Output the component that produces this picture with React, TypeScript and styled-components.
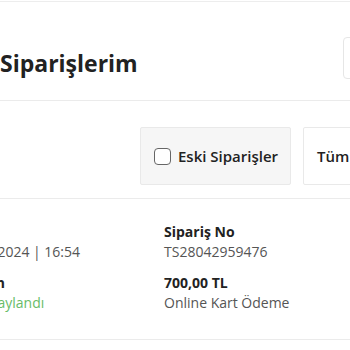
import styled, { createGlobalStyle } from "styled-components";

const GlobalStyle = createGlobalStyle`
  html, body {
    margin: 0;
    padding: 0;
    background: #fff;
  }
  body {
    font-family: "Open Sans", "Liberation Sans", sans-serif;
    color: #222;
  }
`;

const Page = styled.div`
  width: 350px;
  height: 350px;
  overflow: hidden;
  background: #fff;
  padding-top: 1px;
  box-sizing: border-box;
`;

const TitleRow = styled.header`
  width: 600px;
  height: 100px;
  box-sizing: border-box;
  display: flex;
  align-items: flex-start;
  padding-top: 35px;
  border-top: 1px solid #ededed;
  border-bottom: 1px solid #ebebeb;
`;

const Title = styled.h1`
  margin: 10px 0 0;
  font-size: 23px;
  line-height: 32px;
  font-weight: 700;
  color: #222;
`;

const SearchBox = styled.div`
  margin-left: auto;
  width: 255px;
  height: 40px;
  border: 1px solid #e6e6e6;
  border-radius: 4px;
`;

const FilterRow = styled.div`
  display: flex;
  gap: 12px;
  padding: 26px 0 13px 140px;
  border-bottom: 1px solid #ebebeb;
`;

const FilterButton = styled.label<{ $muted?: boolean }>`
  flex: none;
  display: flex;
  align-items: center;
  gap: 7px;
  height: 58px;
  padding: 0 12px 0 13px;
  box-sizing: border-box;
  border: 1px solid #e9e9e9;
  border-radius: 2px;
  background: ${(p) => (p.$muted ? "#f6f6f6" : "#fff")};
  font-size: 15px;
  font-weight: 600;
  color: #222;
`;

const Check = styled.span`
  width: 17px;
  height: 17px;
  box-sizing: border-box;
  border: 1.5px solid #666;
  border-radius: 4px;
  background: #fff;
`;

const OrderCard = styled.section`
  display: grid;
  grid-template-columns: 206px 1fr;
  margin-left: -42px;
  padding: 23px 0 26px;
  border-bottom: 1px solid #ebebeb;
`;

const Column = styled.div`
  display: flex;
  flex-direction: column;
  gap: 11px;
`;

const Group = styled.div`
  display: flex;
  flex-direction: column;
`;

const Label = styled.span`
  font-size: 14px;
  line-height: 20px;
  font-weight: 700;
  color: #222;
  white-space: nowrap;
`;

const Value = styled.span<{ $tone?: "green" }>`
  display: flex;
  align-items: center;
  gap: 6px;
  font-size: 14px;
  line-height: 20px;
  color: ${(p) => (p.$tone === "green" ? "#68bc68" : "#555")};
  white-space: nowrap;
`;

export default function App() {
  return (
    <>
      <GlobalStyle />
      <Page>
        <TitleRow>
          <Title>Siparişlerim</Title>
          <SearchBox />
        </TitleRow>
        <FilterRow>
          <FilterButton $muted>
            <Check />
            Eski Siparişler
          </FilterButton>
          <FilterButton>Tümü Siparişler</FilterButton>
        </FilterRow>
        <OrderCard>
          <Column>
            <Group>
              <Label>Tarih</Label>
              <Value>28.04.2024 | 16:54</Value>
            </Group>
            <Group>
              <Label>1 Ürün</Label>
              <Value $tone="green">
                <svg width="14" height="14" viewBox="0 0 14 14" fill="none">
                  <circle cx="7" cy="7" r="6" stroke="#68bc68" strokeWidth="1.5" />
                  <path d="M4.3 7.2l1.8 1.8 3.6-3.8" stroke="#68bc68" strokeWidth="1.5" />
                </svg>
                Onaylandı
              </Value>
            </Group>
          </Column>
          <Column>
            <Group>
              <Label>Sipariş No</Label>
              <Value>TS28042959476</Value>
            </Group>
            <Group>
              <Label>700,00 TL</Label>
              <Value>Online Kart Ödeme</Value>
            </Group>
          </Column>
        </OrderCard>
      </Page>
    </>
  );
}
